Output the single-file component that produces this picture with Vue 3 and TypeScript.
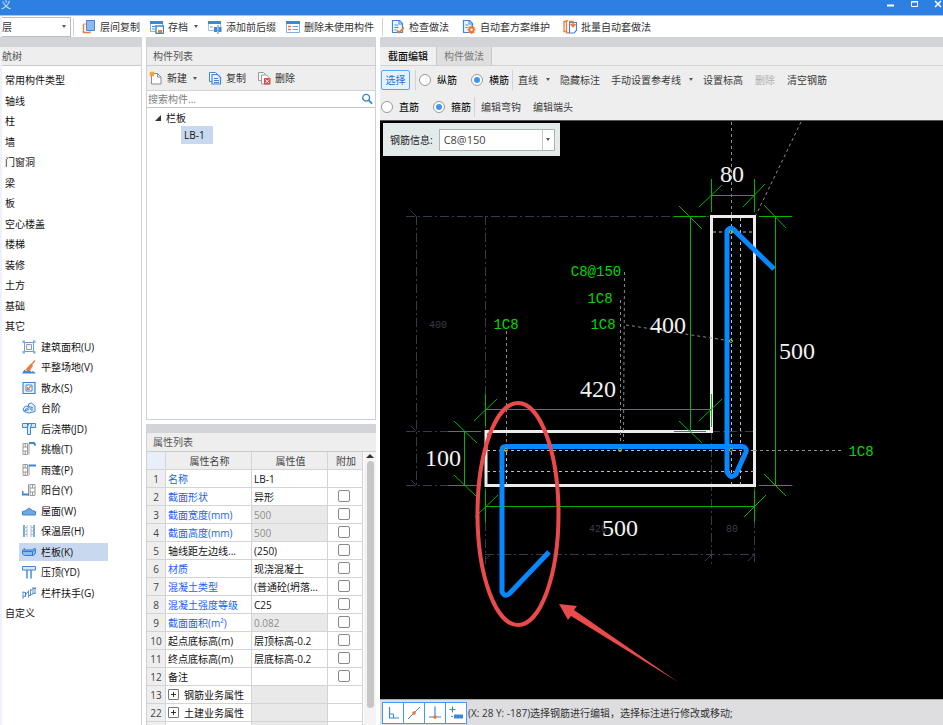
<script setup lang="ts">
import { h, ref, type FunctionalComponent } from 'vue'

interface Shape {
  d: string
  f?: string
  s?: string
  w?: number
}

const B = '#3f86d6'
const L = '#a9cdf2'
const G = '#9a9a9a'
const O = '#ee7a35'

const icons: Record<string, Shape[]> = {
  floorCopy: [
    { d: 'M1.5 4v8.5h7', s: O, w: 1.4 },
    { d: 'M1 4h3M8 12.5V10', s: '#f4a37a', w: 1 },
    { d: 'M4.5 .5h8v10h-8z', f: '#8fb9ea', s: B },
  ],
  archive: [
    { d: 'M.5 1.5h12v10H.5z', f: '#fff', s: '#7db0e6' },
    { d: 'M0 1h13v3H0z', f: B },
    { d: 'M2 6.5h4M2 9h3', s: B },
    { d: 'M6 6h7.5v7.5H6z', f: '#fff', s: B, w: 1.4 },
    { d: 'M8 10h4v3H8z', f: O },
  ],
  affix: [
    { d: 'M.5 1.5h12v9H.5z', f: '#fff', s: '#9cc3ee' },
    { d: 'M0 1h13v3H0z', f: B },
    { d: 'M2 6h3v2H2z', f: L },
    { d: 'M6 7h3v5H6zM10.5 7h3v5h-3z', f: B },
    { d: 'M10 5v9', s: B },
  ],
  unused: [
    { d: 'M.5 1.5h13v11H.5z', f: '#fff', s: '#7db0e6' },
    { d: 'M0 1h14v3H0z', f: B },
    { d: 'M2 6.5h3M2 9.5h3', s: O, w: 1.4 },
    { d: 'M6.5 6.5H12M6.5 9.5H12', s: '#5f9fe0' },
  ],
  check: [
    { d: 'M1.5.5h7l3 3v9h-10z', f: '#eef6ff', s: B, w: 1.2 },
    { d: 'M8 .5V4h3.5M3.5 5h4M3.5 7.5h4M3.5 10h2', s: B },
    { d: 'M6 10.5l2.2 2L13 7.5', s: O, w: 1.7 },
  ],
  scheme: [
    { d: 'M1.5.5h6l3 3v9h-9z', f: '#eef6ff', s: B, w: 1.2 },
    { d: 'M7 .5V4h3.500M3.500 5h3M3.500 7.500h2', s: B },
    { d: 'M9.5 5.5v8.500M5.500 9.700h8M6.700 7l5.600 5.600M12.300 7l-5.600 5.600', s: O, w: 1.8 },
    { d: 'M9.5 7.700a2 2 0 1 0 .01 0z', f: '#fff', s: O, w: 1.6 },
  ],
  batch: [
    { d: 'M3 1.5H1v10h2M5 .8H3.500v12H6', s: O, w: 1.3 },
    { d: 'M6.5 2.5h7v8L11 13H6.500z', f: '#fff', s: B, w: 1.2 },
    { d: 'M6 1.5h4v4M7.500 4l2.500 2.500L12.500 4', s: O, w: 1.6 },
  ],
  create: [
    { d: 'M2.5 2.5h6L12 6v7H2.500z', f: '#fdfdfd', s: '#8c8c8c' },
    { d: 'M8.5 2.5V6H12', s: '#8c8c8c' },
    { d: 'M3 .5v5M.5 3h5M1 1l4 4M5 1L1 5', s: '#f5a030', w: 1.1 },
  ],
  copy: [
    { d: 'M1.5 1.5h6l2 2v7h-8z', f: '#fff', s: B },
    { d: 'M4 3.5h5.500l3 3V13H4z', f: '#e8f2fd', s: B, w: 1.2 },
    { d: 'M6 7.5h4M6 9.5h5M6 11.5h5', s: B },
  ],
  remove: [
    { d: 'M1.5 1.5h5l2 2v6h-7z', f: '#f6f6f6', s: '#9b9b9b' },
    { d: 'M4.5 4h5l3 3v6h-8z', f: '#fff', s: '#9b9b9b' },
    { d: 'M7 7h6.500v6.500H7z', f: '#e14b4b' },
    { d: 'M8.5 8.500l3.500 3.500M12 8.500L8.500 12', s: '#fff' },
  ],
  search: [
    { d: 'M6 1.5a4 4 0 1 0 .01 0z', s: '#2d84c8', w: 1.5 },
    { d: 'M9 8.5l4 4', s: '#2d84c8', w: 2 },
  ],
  area: [
    { d: 'M2.5 1v12M11.500 1v12M1 2.500h12M1 11.500h12', s: '#5f9fe0' },
    { d: 'M4.5 4.500h5v5h-5z', f: '#f2f2f2', s: G },
    { d: 'M.5.5H3V3H.5zM11 .5h2.500V3H11zM.5 11H3v2.500H.5zM11 11h2.500v2.500H11z', f: '#7db0e6' },
  ],
  ground: [
    { d: 'M0 13.500l2.500-4 2 2 2-2.500 3 3 1.500-1 3 2.500z', f: B },
    { d: 'M13 .5L9 5', s: O, w: 1.3 },
    { d: 'M9 3.500l2 2-3 5-3 .5L3.500 9.500z', f: O },
  ],
  apron: [
    { d: 'M1 1.500h12v11H1z', f: '#e4f0fc', s: B, w: 1.2 },
    { d: 'M4 4h6v6H4z', f: '#fff', s: B },
    { d: 'M9 5L6 8M5.500 6v2.500H8', s: O, w: 1.2 },
  ],
  steps: [
    { d: 'M1 8l2.500-3 3 .5V3l3-1L13 5v5.500L7 12l-5-1.500z', f: '#e4f0fc', s: B },
    { d: 'M3 8.500l4-2 3 3M6.500 5.500l4 1M10 9.500V6M2 10l5-1.500', s: B },
  ],
  cast: [
    { d: 'M.5 1.500h13v4h-5v7h-3v-7h-5z', f: '#d9eafb', s: B },
    { d: 'M5.500 1.500v4M7 1.500L5 5M10 1.500L8.500 5.500', s: B },
  ],
  eave: [
    { d: 'M1 1.500h4.500v11H1zM1 5h4.500M1 9h4.500M3.200 1.500V5M3.200 9v3.500M7 1.500v11', s: G },
    { d: 'M7 1h5l1.500 2.500', s: B, w: 2 },
  ],
  canopy: [
    { d: 'M1 1.500h4.500v11H1zM1 5h4.500M1 9h4.500M3.200 1.500V5M3.200 9v3.500M7 1.500v11', s: G },
    { d: 'M7 1.500h7v2H7z', f: B },
  ],
  balcony: [
    { d: 'M8 1.500h5v11H8zM8 5h5M8 9h5M10.500 1.500V5M10.500 9v3.500M6.500 1v12', s: G },
    { d: 'M0 10.500h7v2H0zM0 8h1.500v4H0z', f: B },
  ],
  roof: [{ d: 'M.5 11V7.500L3 7l4-3 3.500 2.500 3 1V11z', f: '#6ea7e2', s: B }],
  insulation: [
    { d: 'M2 1v12M12 1v12', s: B, w: 1.4 },
    { d: 'M5 1v12M9 1v12M2 3.500h3M2 7h3M2 10.500h3M9 3.500h3M9 7h3M9 10.500h3', s: '#a9b9cc' },
  ],
  slab: [
    { d: 'M.5 5l2-1.500v1.500h8l2-2 1 1v4l-2 2.500h-9L.5 9z', f: '#8fbcf0', s: '#2f7cd3' },
    { d: 'M.5 6.500h10v4M10.500 6.500l3-2', s: '#2f7cd3' },
  ],
  coping: [
    { d: 'M.5 1.500h13V5H.5z', f: '#d9eafb', s: B },
    { d: 'M5 5v8.500M9 5v8.500', s: B, w: 1.4 },
  ],
  rail: [
    { d: 'M1 6v7M3.500 6v5M6.500 4.500v7M8.500 3v7M11 1v7M13 1v7', s: '#6f93bd' },
    { d: 'M.5 6l3 .5V10L1 10.500M3.500 9l3-4M6.500 10l2-1M8.500 5L11 2.500h3M9 8.500L13.500 7', s: B },
  ],
  ortho: [
    { d: 'M3.5 1v11H13', s: B, w: 1.2 },
    { d: 'M3.5 8h4v4', s: B },
  ],
  midpoint: [
    { d: 'M1 13L13 1', s: B },
    { d: 'M7 5.200a1.800 1.800 0 1 0 .01 0z', f: O },
  ],
  perp: [
    { d: 'M7 .5v10M1 11h12', s: B, w: 1.2 },
    { d: 'M7 9.200a1.800 1.800 0 1 0 .01 0z', f: O },
  ],
  dynamic: [
    { d: 'M3.5.5v6M.5 3.500h6', s: B, w: 1.2 },
    { d: 'M5 8.500h9v4H5zM2 10h2v1H2z', f: B },
  ],
}

const Icon: FunctionalComponent<{ name: string }> = (props) =>
  h(
    'svg',
    { viewBox: '0 0 14 14', width: 14, height: 14, 'aria-hidden': 'true' },
    icons[props.name].map((p) =>
      h('path', { d: p.d, fill: p.f ?? 'none', stroke: p.s ?? 'none', 'stroke-width': p.w ?? 1 }),
    ),
  )
Icon.props = ['name']

interface Tool {
  icon: string
  text: string
  menu?: boolean
}
const fileTools: Tool[] = [
  { icon: 'floorCopy', text: '层间复制' },
  { icon: 'archive', text: '存档', menu: true },
  { icon: 'affix', text: '添加前后缀' },
  { icon: 'unused', text: '删除未使用构件' },
]
const methodTools: Tool[] = [
  { icon: 'check', text: '检查做法' },
  { icon: 'scheme', text: '自动套方案维护' },
  { icon: 'batch', text: '批量自动套做法' },
]
const listTools: Tool[] = [
  { icon: 'create', text: '新建', menu: true },
  { icon: 'copy', text: '复制' },
  { icon: 'remove', text: '删除' },
]

interface NavItem {
  text: string
  icon?: string
}
const nav: NavItem[] = [
  ...['常用构件类型', '轴线', '柱', '墙', '门窗洞', '梁', '板', '空心楼盖', '楼梯', '装修', '土方', '基础', '其它'].map(
    (text) => ({ text }),
  ),
  { text: '建筑面积(U)', icon: 'area' },
  { text: '平整场地(V)', icon: 'ground' },
  { text: '散水(S)', icon: 'apron' },
  { text: '台阶', icon: 'steps' },
  { text: '后浇带(JD)', icon: 'cast' },
  { text: '挑檐(T)', icon: 'eave' },
  { text: '雨蓬(P)', icon: 'canopy' },
  { text: '阳台(Y)', icon: 'balcony' },
  { text: '屋面(W)', icon: 'roof' },
  { text: '保温层(H)', icon: 'insulation' },
  { text: '栏板(K)', icon: 'slab' },
  { text: '压顶(YD)', icon: 'coping' },
  { text: '栏杆扶手(G)', icon: 'rail' },
  { text: '自定义' },
]
const current = ref('栏板(K)')

interface Prop {
  no: string
  name: string
  value?: string
  link?: boolean
  locked?: boolean
  check?: boolean
  group?: boolean
}
const properties: Prop[] = [
  { no: '1', name: '名称', value: 'LB-1', link: true },
  { no: '2', name: '截面形状', value: '异形', link: true, check: true },
  { no: '3', name: '截面宽度(mm)', value: '500', link: true, locked: true, check: true },
  { no: '4', name: '截面高度(mm)', value: '500', link: true, locked: true, check: true },
  { no: '5', name: '轴线距左边线...', value: '(250)', check: true },
  { no: '6', name: '材质', value: '现浇混凝土', link: true, check: true },
  { no: '7', name: '混凝土类型', value: '(普通砼(坍落...', link: true, check: true },
  { no: '8', name: '混凝土强度等级', value: 'C25', link: true, check: true },
  { no: '9', name: '截面面积(m²)', value: '0.082', link: true, locked: true, check: true },
  { no: '10', name: '起点底标高(m)', value: '层顶标高-0.2', check: true },
  { no: '11', name: '终点底标高(m)', value: '层底标高-0.2', check: true },
  { no: '12', name: '备注', value: '', check: true },
  { no: '13', name: '钢筋业务属性', group: true, locked: true },
  { no: '22', name: '土建业务属性', group: true, locked: true },
  { no: '', name: '', group: true, locked: true },
]

const barKind = ref('横筋')
const barShape = ref('箍筋')
const rebar = ref('C8@150')
const keyword = ref('')
const snaps = ['ortho', 'midpoint', 'perp', 'dynamic']

// Dimension lines with their extension lines and slanted end ticks
const dimensions = [
  'M711.5 195.5H754.5M711.5 179V212M754.5 179V212M699 207L722 185M743 207L765 184',
  'M690.5 216V431M674 216.5H706M674 431.5H706M679 206L702 229M679 421L702 443',
  'M775.5 216V485M759 216.5H792M759 485.5H792M764 205L786 228M764 474L786 496',
  'M485.5 409.5H711.5M485.5 394V426M711.5 394V427M474 421L497 399M699 421L722 399',
  'M464.5 431V485M448 431.5H481M448 485.5H481M454 421L477 443M454 475L477 497',
  'M485.5 506.5H754.5M485.5 490V522M754.5 490V522M475 517L498 495M744 517L766 495',
]
const dots = [
  [506, 450],
  [620, 450],
  [731, 450],
  [731, 232],
  [731, 341],
]
</script>

<template>
  <div class="app">
    <header class="titlebar">
      <span class="title">义</span>
      <div class="window-buttons">
        <button type="button" aria-label="最小化">
          <svg width="8" height="8"><path d="M1 5.5h7" stroke="#fff" stroke-width="2" /></svg>
        </button>
        <button type="button" aria-label="最大化">
          <svg width="8" height="8"><path d="M1.5 1.5h6v5h-6zM1 2h7" fill="none" stroke="#fff" /></svg>
        </button>
        <button type="button" aria-label="关闭">
          <svg width="8" height="8"><path d="M1 1l6 6M7 1L1 7" stroke="#fff" stroke-width="1.5" /></svg>
        </button>
      </div>
    </header>

    <div class="ribbon">
      <div class="combo floor">
        <select aria-label="楼层"><option>层</option></select>
        <i class="caret"></i>
      </div>
      <span class="rule"></span>
      <div class="tools">
        <button v-for="t in fileTools" :key="t.text" type="button" class="tool">
          <Icon :name="t.icon" />{{ t.text }}<i v-if="t.menu" class="caret"></i>
        </button>
      </div>
      <span class="rule"></span>
      <div class="tools wide">
        <button v-for="t in methodTools" :key="t.text" type="button" class="tool">
          <Icon :name="t.icon" />{{ t.text }}
        </button>
      </div>
    </div>

    <main class="workspace">
      <nav class="panel nav">
        <h2 class="heading cut">航树</h2>
        <ul class="nav-list">
          <li v-for="n in nav" :key="n.text" :class="{ child: n.icon }">
            <a href="#" :class="{ selected: n.text === current }" @click.prevent="current = n.text">
              <Icon v-if="n.icon" :name="n.icon" />{{ n.text }}
            </a>
          </li>
        </ul>
      </nav>

      <div class="middle">
        <section class="panel components">
          <h2 class="heading">构件列表</h2>
          <div class="list-tools">
            <button v-for="t in listTools" :key="t.text" type="button" class="tool">
              <Icon :name="t.icon" />{{ t.text }}<i v-if="t.menu" class="caret"></i>
            </button>
          </div>
          <div class="search">
            <input v-model="keyword" type="text" placeholder="搜索构件..." aria-label="搜索构件" />
            <button type="button" aria-label="搜索"><Icon name="search" /></button>
          </div>
          <ul class="tree">
            <li>
              <span class="branch"><svg width="6" height="6"><path d="M6 0v6H0z" fill="#333" /></svg>栏板</span>
              <ul>
                <li><a href="#" class="leaf" @click.prevent>LB-1</a></li>
              </ul>
            </li>
          </ul>
        </section>

        <section class="panel props">
          <h2 class="heading">属性列表</h2>
          <div class="sheet">
            <table>
              <colgroup>
                <col class="c-no" /><col class="c-name" /><col class="c-value" /><col class="c-add" />
              </colgroup>
              <thead>
                <tr><th class="corner"></th><th>属性名称</th><th>属性值</th><th>附加</th></tr>
              </thead>
              <tbody>
                <tr v-for="p in properties" :key="p.no">
                  <td class="no">{{ p.no }}</td>
                  <td :class="{ link: p.link }">
                    <span v-if="p.group" class="group">
                      <button type="button" aria-label="展开">
                        <svg width="5" height="5"><path d="M2.5 0v5M0 2.5h5" stroke="#333" /></svg>
                      </button>{{ p.name }}
                    </span>
                    <template v-else>{{ p.name }}</template>
                  </td>
                  <td :class="{ locked: p.locked }">{{ p.value }}</td>
                  <td class="add"><input v-if="p.check" type="checkbox" :aria-label="p.name" /></td>
                </tr>
              </tbody>
            </table>
            <div class="scroll">
              <svg width="8" height="4"><path d="M0 4l4-4 4 4z" fill="#333" /></svg>
              <span class="thumb"></span>
            </div>
          </div>
        </section>
      </div>

      <section class="panel editor">
        <div class="tabs" role="tablist">
          <button type="button" role="tab" class="active" aria-selected="true">截面编辑</button>
          <button type="button" role="tab" aria-selected="false">构件做法</button>
        </div>
        <div class="edit-tools">
          <div class="row">
            <button type="button" class="pick">选择</button>
            <span class="rule"></span>
            <label><input v-model="barKind" type="radio" name="kind" value="纵筋" />纵筋</label>
            <label><input v-model="barKind" type="radio" name="kind" value="横筋" />横筋</label>
            <span class="rule"></span>
            <button type="button" class="cmd menu">直线<i class="caret"></i></button>
            <button type="button" class="cmd">隐藏标注</button>
            <button type="button" class="cmd menu">手动设置参考线<i class="caret"></i></button>
            <button type="button" class="cmd">设置标高</button>
            <button type="button" class="cmd" disabled>删除</button>
            <button type="button" class="cmd">清空钢筋</button>
          </div>
          <div class="row">
            <label><input v-model="barShape" type="radio" name="shape" value="直筋" />直筋</label>
            <label><input v-model="barShape" type="radio" name="shape" value="箍筋" />箍筋</label>
            <span class="rule"></span>
            <button type="button" class="cmd">编辑弯钩</button>
            <button type="button" class="cmd">编辑端头</button>
          </div>
        </div>

        <div class="canvas">
          <svg class="drawing" viewBox="380 121 563 578" preserveAspectRatio="xMinYMin meet">
            <g fill="none" stroke="#343c4a" stroke-dasharray="9 3 2 3">
              <path d="M406 216.5H711M416.5 216V485M485.5 216V564M406 431.5H448M406 485.5H448M711 431.5H754M485 554.5H754M711.5 431V564M754.5 485V564" />
              <path stroke-dasharray="none" d="M411 211l5 5M411 426l5 5M411 480l5 5M705 561l6-6M748 561l6-6M485 560l6-6" />
            </g>
            <g class="faint">
              <text x="438" y="328">400</text>
              <text x="598" y="532">420</text>
              <text x="732" y="532">80</text>
            </g>
            <path d="M711.5 216.5H754.5V485.5H486V431.5H711.5Z" fill="none" stroke="#ececec" stroke-width="3" />
            <g fill="none" stroke="#8c8c8c" stroke-dasharray="3 3">
              <path d="M731.5 122V216M801 122L756 215M506.5 331V446M620.5 300V441M624.5 272L623.5 441M626 325L731 341M754 450.5H841" />
              <path d="M731.5 218V485M740.5 218V485M713 232H754M506.5 446V485M487 450.5H754M487 471.5H754" stroke="#a9bfda" />
            </g>
            <path v-for="d in dimensions" :key="d" :d="d" fill="none" stroke="#00b400" />
            <path
              d="M774 269L736 232Q731 225 727 231V472Q731 480 736 474L746 452Q747 447 742 446.5H506Q502 446.5 502 450V592Q505 598 510 593L549 552"
              fill="none" stroke="#0689ff" stroke-width="5" stroke-linejoin="round"
            />
            <circle v-for="p in dots" :key="p.join()" :cx="p[0]" :cy="p[1]" r="1.5" fill="none" stroke="#b9a52a" />
            <g class="size">
              <text x="732" y="182">80</text>
              <text x="668" y="333">400</text>
              <text x="797" y="359">500</text>
              <text x="598" y="397">420</text>
              <text x="443" y="466">100</text>
              <text x="620" y="536">500</text>
            </g>
            <g class="mark">
              <text x="596" y="276">C8@150</text>
              <text x="600" y="303">1C8</text>
              <text x="603" y="329">1C8</text>
              <text x="506" y="329">1C8</text>
              <text x="861" y="456">1C8</text>
            </g>
            <ellipse cx="518" cy="514" rx="40.5" ry="111" fill="none" stroke="#e94a4a" stroke-width="4" />
            <path d="M559 604L577 606L574 610L678 682L571 616L568 620Z" fill="#e94a4a" />
          </svg>
          <div class="rebar">
            <label for="rebar">钢筋信息:</label>
            <div class="combo">
              <select id="rebar" v-model="rebar"><option>C8@150</option></select>
              <i class="caret"></i>
            </div>
          </div>
        </div>

        <footer class="status">
          <div class="snaps">
            <button v-for="s in snaps" :key="s" type="button" :aria-label="s"><Icon :name="s" /></button>
          </div>
          <span>(X: 28 Y: -187)选择钢筋进行编辑，选择标注进行修改或移动;</span>
        </footer>
      </section>
    </main>
  </div>
</template>

<style>
body {
  margin: 0;
}
</style>

<style scoped>
.app,
.app * {
  box-sizing: border-box;
}
.app {
  display: flex;
  flex-direction: column;
  height: 100vh;
  overflow: hidden;
  background: #fff;
  color: #111;
  font: 10px/16px "Open Sans", "Noto Sans CJK SC", sans-serif;
}
button,
input,
select {
  font: inherit;
  color: inherit;
  margin: 0;
}
button {
  border: 0;
  padding: 0;
  background: none;
  white-space: nowrap;
}
ul {
  list-style: none;
  margin: 0;
  padding: 0;
}
a {
  color: inherit;
  text-decoration: none;
}
svg {
  display: block;
  flex: none;
}
.caret {
  flex: none;
  width: 0;
  height: 0;
  border: 2px solid transparent;
  border-top: 3px solid #555;
  border-bottom: 0;
}
.rule {
  flex: none;
  width: 1px;
  height: 18px;
  background: #d2d2d2;
}

.titlebar {
  flex: none;
  display: flex;
  justify-content: space-between;
  height: 16px;
  padding: 0 1px;
  background: #2c80e2;
  border-bottom: 1px solid #a3c5ef;
  color: #e8f2ff;
}
.title {
  line-height: 10px;
}
.window-buttons {
  display: flex;
  gap: 16px;
  height: 8px;
}

.ribbon {
  flex: none;
  display: flex;
  align-items: center;
  height: 21px;
  gap: 8px;
  border-left: 2px solid #eef2fa;
  color: #333;
}
.tools {
  display: flex;
  gap: 10px;
}
.tools.wide {
  gap: 13px;
}
.tool {
  display: flex;
  align-items: center;
  gap: 4px;
}
.tool .caret {
  margin-left: 2px;
}
.combo {
  position: relative;
  display: flex;
  align-items: center;
}
.combo select {
  appearance: none;
  width: 100%;
  height: 100%;
  border: 1px solid #b9bdc2;
  border-radius: 0;
  background: #fff;
}
.combo .caret {
  position: absolute;
  right: 5px;
  pointer-events: none;
}
.floor {
  width: 69px;
  height: 20px;
  margin-right: -6px;
}
.floor select {
  padding: 0;
  border-left: 0;
}

.workspace {
  flex: 1;
  min-height: 0;
  display: grid;
  grid-template-columns: 142px 230px minmax(0, 1fr);
  gap: 4px;
}
.panel {
  display: flex;
  flex-direction: column;
  min-width: 0;
  min-height: 0;
  overflow: hidden;
  border-top: 10px solid #d3d4da;
}
.heading {
  flex: none;
  height: 19px;
  margin: 0;
  padding: 0 6px;
  background: #eee;
  border-bottom: 1px solid #c9cbce;
  color: #555;
  font-size: 10px;
  font-weight: 400;
  line-height: 18px;
}
.heading.cut {
  padding: 0;
}
.nav {
  box-shadow: inset -1px 0 #d3d4da, inset 2px 0 #eef2fa;
  padding: 0 1px 0 2px;
}
.nav-list {
  padding-top: 4px;
}
.nav-list li {
  display: flex;
  align-items: center;
  height: 20px;
  padding-left: 3px;
}
.nav-list li:nth-child(even) {
  height: 21px;
}
.nav-list li.child {
  padding-left: 17px;
}
.nav-list a {
  display: flex;
  align-items: center;
  gap: 5px;
  height: 18px;
}
.nav-list .child a {
  width: 89px;
  padding-left: 3px;
}
.nav-list a.selected {
  background: #c8d8ef;
}

.middle {
  display: flex;
  flex-direction: column;
  gap: 4px;
  min-height: 0;
}
.components {
  flex: 383 1 0;
  border-right: 1px solid #cfd0d5;
  border-bottom: 1px solid #cfd0d5;
  border-left: 1px solid #cfd0d5;
}
.list-tools {
  flex: none;
  display: flex;
  align-items: center;
  gap: 11px;
  height: 25px;
  padding-left: 2px;
  background: #eee;
  border-bottom: 1px solid #d3d4da;
  color: #333;
}
.search {
  flex: none;
  display: flex;
  align-items: center;
  height: 17px;
  padding: 0 2px 0 1px;
  border-bottom: 1px solid #c3c5c9;
}
.search input {
  flex: 1;
  min-width: 0;
  height: 16px;
  padding: 0;
  border: 0;
  outline: 0;
}
.search input::placeholder {
  color: #808080;
  opacity: 1;
}
.search svg {
  width: 12px;
  height: 12px;
}
.tree {
  padding: 1px 8px;
}
.branch {
  display: flex;
  align-items: center;
  gap: 5px;
  height: 17px;
}
.leaf {
  display: inline-block;
  height: 18px;
  margin-left: 26px;
  padding: 0 8px 0 3px;
  background: #c8d8ef;
  line-height: 18px;
}
.props {
  flex: 301 1 0;
  border-top-width: 9px;
  border-left: 1px solid #cfd0d5;
}
.sheet {
  flex: 1;
  min-height: 0;
  display: flex;
  justify-content: space-between;
  overflow: hidden;
}
table {
  width: 216px;
  height: max-content;
  table-layout: fixed;
  border-collapse: separate;
  border-spacing: 0;
}
.c-no {
  width: 19px;
}
.c-name {
  width: 86px;
}
.c-value {
  width: 76px;
}
.c-add {
  width: 35px;
}
th,
td {
  height: 18px;
  padding: 1px 0 0 2px;
  border-right: 1px solid #d3d4d6;
  border-bottom: 1px solid #d3d4d6;
  font-weight: 400;
  line-height: 16px;
  text-align: left;
  white-space: nowrap;
  overflow: hidden;
}
th {
  background: #eee;
  color: #444;
  text-align: center;
}
.corner {
  background: #e9eff8;
}
.no {
  padding-left: 0;
  background: #eee;
  color: #444;
  text-align: center;
}
.link {
  color: #1c62f2;
}
.locked {
  background: #e9e9e9;
  color: #8d8d8d;
}
.group {
  display: flex;
  align-items: center;
  gap: 5px;
  height: 16px;
}
.group button {
  display: grid;
  place-items: center;
  flex: none;
  width: 11px;
  height: 11px;
  border: 1px solid #777;
  border-radius: 1px;
}
.add {
  padding: 0 2px 0 0;
}
.add input {
  appearance: none;
  display: block;
  width: 12px;
  height: 12px;
  margin: 0 auto;
  border: 1px solid #888;
  border-radius: 2px;
  background: #fff;
}
.scroll {
  display: flex;
  flex-direction: column;
  align-items: center;
  gap: 3px;
  width: 12px;
  padding: 2px 0 17px;
  background: #f4f4f4;
}
.thumb {
  flex: 1;
  width: 7px;
  border-radius: 4px;
  background: #c6c6c6;
}

.tabs {
  flex: none;
  display: flex;
  height: 19px;
  background: #eee;
  border-bottom: 1px solid #d0d2d4;
}
.tabs button {
  padding: 0 7px;
  background: #dfdfdf;
  border-right: 1px solid #c9c9c9;
  color: #777;
}
.tabs .active {
  padding: 0 8px;
  background: #f0f0f0;
  color: #111;
  font-weight: 500;
}
.edit-tools {
  flex: none;
  background: #eee;
  border-bottom: 1px solid #555;
  color: #3a3a3a;
}
.row {
  display: flex;
  align-items: center;
  height: 27px;
  padding-left: 1px;
}
.pick {
  width: 29px;
  height: 20px;
  margin-right: 5px;
  border: 1px solid #58a6f7;
  border-radius: 2px;
  background: #e5f1fd;
  color: #1d74dc;
}
.row .rule {
  height: 20px;
}
.row .rule + label {
  margin-left: 3px;
}
.row label {
  display: flex;
  align-items: center;
  gap: 6px;
  width: 52px;
  color: #000;
}
.row label + .rule {
  margin-left: -11px;
}
.row input {
  appearance: none;
  display: grid;
  place-items: center;
  width: 12px;
  height: 12px;
  border: 1px solid #999;
  border-radius: 50%;
  background: #fff;
}
.row input:checked::before {
  content: "";
  width: 6px;
  height: 6px;
  border-radius: 50%;
  background: #3f97f2;
}
.cmd {
  display: flex;
  align-items: center;
  gap: 8px;
  padding: 0 6px;
}
.cmd:disabled {
  color: #b0b0b0;
}
.cmd.menu {
  padding: 0 4px 0 5px;
}

.canvas {
  flex: 1;
  min-height: 0;
  position: relative;
  overflow: hidden;
  background: #000;
}
.drawing {
  width: 100%;
  height: 100%;
}
.drawing text {
  text-anchor: middle;
}
.size text {
  font-family: "Liberation Serif", serif;
  font-size: 24px;
  fill: #f2f2f2;
}
.mark text {
  font-family: "Liberation Mono", monospace;
  font-size: 14px;
  fill: #00d800;
}
.faint text {
  font-family: "Liberation Mono", monospace;
  font-size: 10px;
  fill: #3a3e48;
}
.rebar {
  position: absolute;
  top: 2px;
  left: 3px;
  display: flex;
  align-items: center;
  gap: 6px;
  height: 33px;
  padding: 0 5px 0 7px;
  background: #e2eaea;
  color: #222;
}
.rebar .combo {
  width: 116px;
  height: 22px;
}
.rebar select {
  padding: 0 4px;
  border: 1px solid #adb3b3;
  background: linear-gradient(#c4c8c8, #c4c8c8) right 11px top / 1px 100% no-repeat #fff;
  color: #444;
  font-size: 11px;
}

.status {
  flex: none;
  display: flex;
  align-items: center;
  height: 26px;
  padding-left: 2px;
  border-top: 1px solid #aaa;
  background: #dedee0;
  color: #333;
  white-space: nowrap;
}
.snaps {
  display: flex;
}
.snaps button {
  display: grid;
  place-items: center;
  width: 22px;
  height: 22px;
  margin-right: -1px;
  border: 1px solid #3c9cff;
  background: #fff;
}
.snaps + span {
  padding-left: 2px;
}
</style>
